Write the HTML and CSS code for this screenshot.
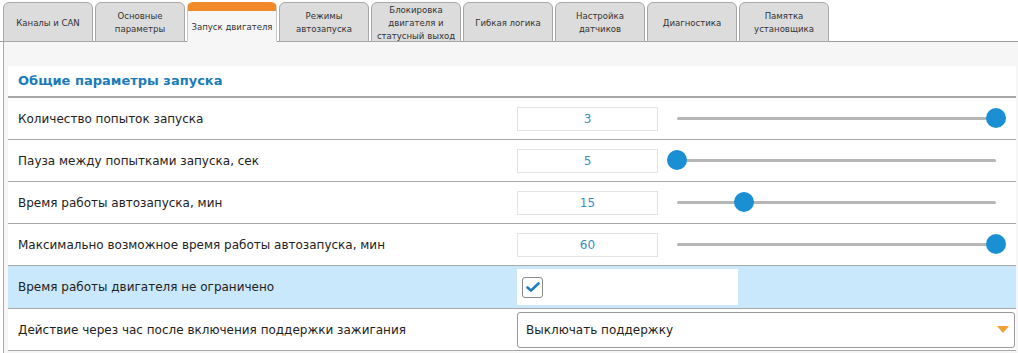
FILE: index.html
```html
<!DOCTYPE html>
<html lang="ru">
  <head>
    <meta charset="UTF-8" />
    <title>Запуск двигателя</title>
    <link rel="stylesheet" href="styles.css">
  </head>
  <body>
    <nav class="tabs">
      <div class="tab">Каналы и CAN</div>
      <div class="tab">Основные<br>параметры</div>
      <div class="tab active">Запуск двигателя</div>
      <div class="tab">Режимы<br>автозапуска</div>
      <div class="tab">Блокировка<br>двигателя и<br>статусный выход</div>
      <div class="tab">Гибкая логика</div>
      <div class="tab">Настройка<br>датчиков</div>
      <div class="tab">Диагностика</div>
      <div class="tab">Памятка<br>установщика</div>
    </nav>

    <main class="panel">
      <section class="group">
        <h2 class="group-title">Общие параметры запуска</h2>

        <div class="row">
          <div class="label">Количество попыток запуска</div>
          <div class="control">
            <div class="value">3</div>
            <div class="slider"><div class="slider-thumb" style="left: 100%"></div></div>
          </div>
        </div>

        <div class="row">
          <div class="label">Пауза между попытками запуска, сек</div>
          <div class="control">
            <div class="value">5</div>
            <div class="slider"><div class="slider-thumb" style="left: 0%"></div></div>
          </div>
        </div>

        <div class="row">
          <div class="label">Время работы автозапуска, мин</div>
          <div class="control">
            <div class="value">15</div>
            <div class="slider"><div class="slider-thumb" style="left: 21%"></div></div>
          </div>
        </div>

        <div class="row">
          <div class="label">Максимально возможное время работы автозапуска, мин</div>
          <div class="control">
            <div class="value">60</div>
            <div class="slider"><div class="slider-thumb" style="left: 100%"></div></div>
          </div>
        </div>

        <div class="row selected">
          <div class="label">Время работы двигателя не ограничено</div>
          <div class="control">
            <div class="check-box">
              <span class="checkbox">
                <svg width="14" height="12" viewBox="0 0 14 12">
                  <path d="M1.5 6.5 L5 9.5 L12.5 2.5" fill="none" stroke="#1e7fc0" stroke-width="2.6" stroke-linecap="round" stroke-linejoin="round"/>
                </svg>
              </span>
            </div>
          </div>
        </div>

        <div class="row">
          <div class="label">Действие через час после включения поддержки зажигания</div>
          <div class="control">
            <div class="select">
              <span>Выключать поддержку</span>
              <span class="select-arrow"></span>
            </div>
          </div>
        </div>
      </section>
    </main>
  </body>
</html>
```

FILE: styles.css
```css
* {
  margin: 0;
  padding: 0;
  box-sizing: border-box;
}

body {
  font-family: "DejaVu Sans", Verdana, sans-serif;
  color: #222;
  background: #fff;
}

/* tabs */
.tabs {
  display: flex;
  gap: 2px;
  padding: 2px 0 0 3px;
  border-bottom: 1px solid #9c9c9c;
  height: 42px;
}

.tab {
  width: 90px;
  height: 40px;
  margin-bottom: -1px;
  display: flex;
  align-items: center;
  justify-content: center;
  text-align: center;
  font-family: "DejaVu Sans Condensed", "DejaVu Sans", sans-serif;
  font-size: 9.5px;
  line-height: 13px;
  white-space: nowrap;
  color: #333;
  background: #dcdcdc;
  border: 1px solid #a8a8a8;
  border-radius: 6px 6px 0 0;
}

.tab.active {
  background: #f6f6f6;
  border-color: #c8c8c8;
  border-top: 9px solid #f08a2a;
  border-bottom-color: #f6f6f6;
}

/* panel */
.panel {
  background: #f6f6f6;
  border-left: 1px solid #a8a8a8;
  margin-left: 3px;
  padding: 24px 2px 0 4px;
  height: 311px;
}

.group {
  background: #fff;
}

.group-title {
  height: 32px;
  padding-left: 10px;
  line-height: 30px;
  font-size: 13px;
  font-weight: bold;
  color: #1b7bb8;
  border-bottom: 2px solid #a8a8a8;
}

.row {
  display: grid;
  grid-template-columns: 509px 1fr;
  align-items: center;
  height: 42px;
  border-bottom: 1px solid #a8a8a8;
}

.row.selected {
  background: #c9e8fb;
  height: 43px;
}

.label {
  padding-left: 10px;
  font-size: 12px;
}

.control {
  display: flex;
  align-items: center;
}

.value {
  width: 141px;
  height: 24px;
  line-height: 22px;
  text-align: center;
  font-size: 12px;
  color: #3a8fc0;
  border: 1px solid #e3e3e3;
}

.slider {
  flex: 1;
  position: relative;
  height: 3px;
  margin: 0 20px 0 19px;
  background: #b6b6b6;
  border-radius: 2px;
}

.slider-thumb {
  position: absolute;
  top: -9px;
  width: 20px;
  height: 20px;
  margin-left: -10px;
  border-radius: 50%;
  background: #1a8fd3;
}

.check-box {
  width: 221px;
  height: 36px;
  background: #fff;
  display: flex;
  align-items: center;
  padding-left: 5px;
}

.checkbox {
  width: 21px;
  height: 21px;
  border: 1px solid #8a8a8a;
  border-radius: 3px;
  background: #fff;
  display: flex;
  align-items: center;
  justify-content: center;
}

.select {
  flex: 1;
  margin-right: 1px;
  height: 36px;
  display: flex;
  align-items: center;
  justify-content: space-between;
  padding: 0 5px 0 8px;
  font-size: 12px;
  border: 1px solid #9a9a9a;
  border-radius: 3px;
  background: #fff;
}

.select-arrow {
  width: 0;
  height: 0;
  border-left: 6px solid transparent;
  border-right: 6px solid transparent;
  border-top: 7px solid #f0a030;
}
```
